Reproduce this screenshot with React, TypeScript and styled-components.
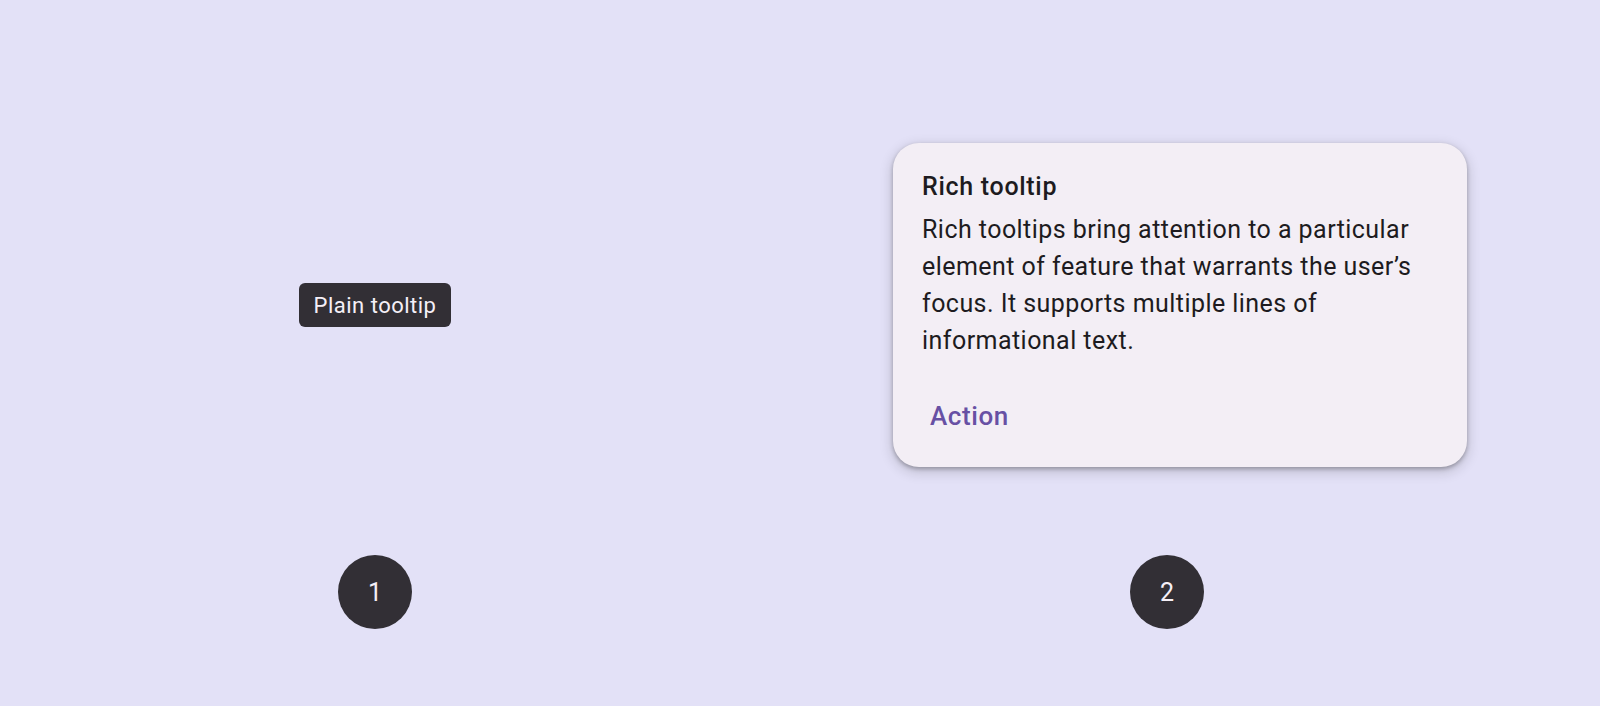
import React from 'react'
import styled, { createGlobalStyle } from 'styled-components'

const GlobalStyle = createGlobalStyle`
    html, body {
        margin: 0;
        padding: 0;
        background-color: #e3e1f7;
    }

    body {
        font-family: Roboto, "Open Sans", "Liberation Sans", sans-serif;
        -webkit-font-smoothing: antialiased;
    }
`

const Page = styled.div`
    width: 1600px;
    height: 706px;

    display: grid;
    grid-template-columns: 750px 834px;

    background-color: #e3e1f7;
    overflow: hidden;
`

const Column = styled.div`
    display: flex;
    flex-direction: column;
    align-items: center;
`

const Stage = styled.div<{ $shift?: number }>`
    width: 100%;
    height: 555px;
    padding-top: 55px;
    padding-left: ${p => (p.$shift ?? 0) * 2}px;
    box-sizing: border-box;

    display: flex;
    align-items: center;
    justify-content: center;
`

const PlainTooltip = styled.div`
    height: 44px;
    padding: 0 15px;
    box-sizing: border-box;

    border-radius: 6px;
    background-color: #322f35;

    display: flex;
    align-items: center;

    font-size: 22px;
    letter-spacing: 0.5px;
    color: #f5eff7;
    white-space: nowrap;
`

const RichTooltip = styled.div`
    width: 574px;
    height: 324px;
    padding: 27px 31px 0 29px;
    box-sizing: border-box;

    border-radius: 26px;
    background-color: #f3eef5;
    box-shadow: 0 2px 4px rgba(0, 0, 0, 0.28), 0 4px 12px 3px rgba(0, 0, 0, 0.12);

    display: flex;
    flex-direction: column;
`

const Title = styled.div`
    font-size: 25px;
    font-weight: 500;
    line-height: 34px;
    letter-spacing: 0.7px;
    color: #1d1b20;
`

const Body = styled.div`
    margin-top: 7px;

    font-size: 25px;
    line-height: 37px;
    letter-spacing: 0.45px;
    color: #1d1b20;
`

const ActionButton = styled.button`
    align-self: flex-start;
    margin-top: 35px;
    margin-left: 0;
    padding: 0 8px;
    height: 44px;

    border: none;
    border-radius: 22px;
    background: transparent;

    font-family: inherit;
    font-size: 26px;
    font-weight: 500;
    letter-spacing: 0.6px;
    color: #6750a4;
    cursor: pointer;
`

const Marker = styled.div`
    width: 74px;
    height: 74px;

    border-radius: 50%;
    background-color: #322f35;

    display: flex;
    align-items: center;
    justify-content: center;

    font-size: 25px;
    color: #f5eff7;
`

export default function App() {
    return (
        <>
            <GlobalStyle />
            <Page>
                <Column>
                    <Stage>
                        <PlainTooltip>Plain tooltip</PlainTooltip>
                    </Stage>
                    <Marker>1</Marker>
                </Column>

                <Column>
                    <Stage $shift={13}>
                        <RichTooltip>
                            <Title>Rich tooltip</Title>
                            <Body>
                                Rich tooltips bring attention to a particular element of feature that warrants the user’s focus. It supports multiple lines of informational text.
                            </Body>
                            <ActionButton>Action</ActionButton>
                        </RichTooltip>
                    </Stage>
                    <Marker>2</Marker>
                </Column>
            </Page>
        </>
    )
}
